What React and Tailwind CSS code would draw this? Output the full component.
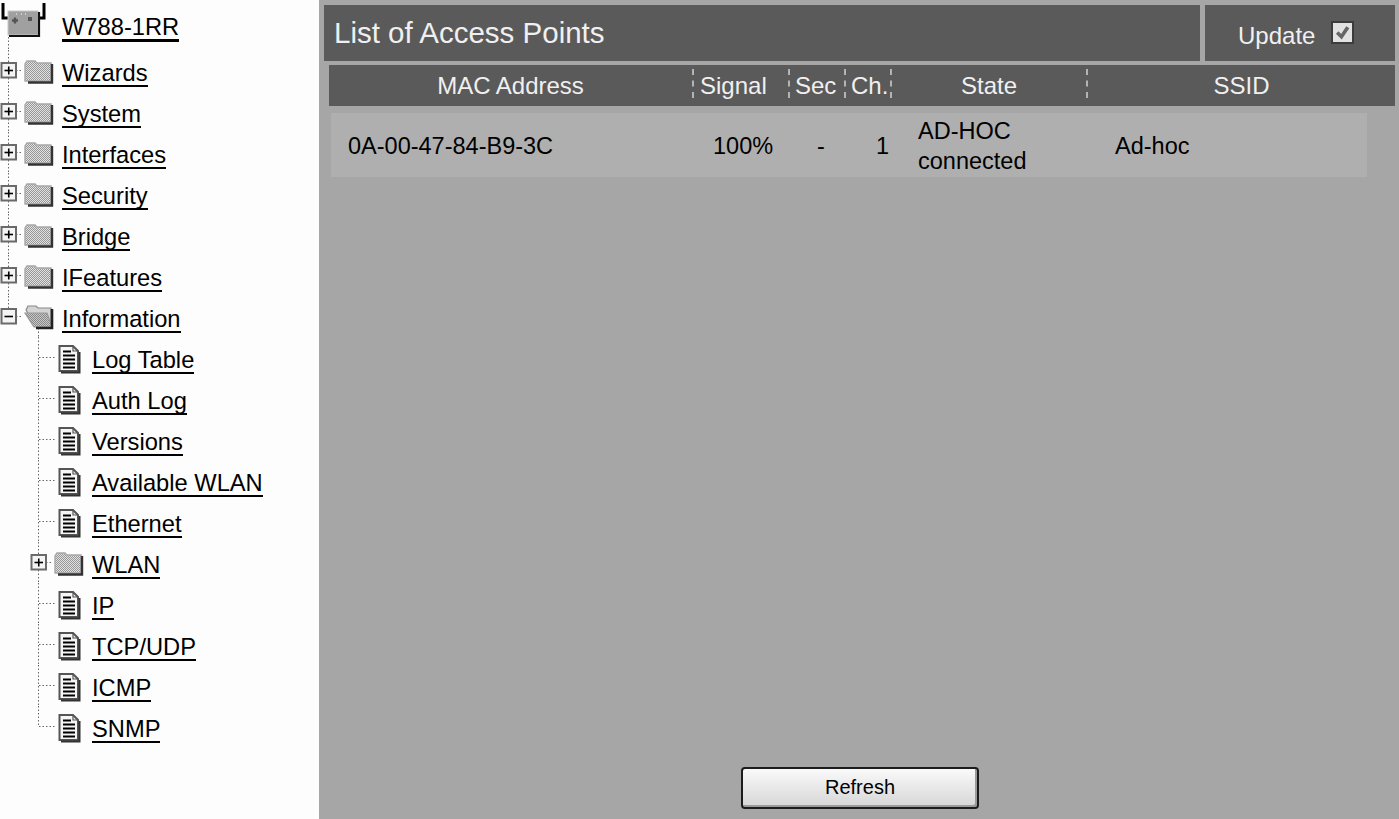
import React from 'react';

const treeItems = [
  { label: 'Wizards', kind: 'folder' },
  { label: 'System', kind: 'folder' },
  { label: 'Interfaces', kind: 'folder' },
  { label: 'Security', kind: 'folder' },
  { label: 'Bridge', kind: 'folder' },
  { label: 'IFeatures', kind: 'folder' },
  { label: 'Information', kind: 'open' },
  { label: 'Log Table', kind: 'doc' },
  { label: 'Auth Log', kind: 'doc' },
  { label: 'Versions', kind: 'doc' },
  { label: 'Available WLAN', kind: 'doc' },
  { label: 'Ethernet', kind: 'doc' },
  { label: 'WLAN', kind: 'subfolder' },
  { label: 'IP', kind: 'doc' },
  { label: 'TCP/UDP', kind: 'doc' },
  { label: 'ICMP', kind: 'doc' },
  { label: 'SNMP', kind: 'doc', last: true },
];

const DOTS = { stroke: '#666', strokeWidth: 1, strokeDasharray: '1.5 2' };

const ToggleBox = ({ x, open }) => (
  <g>
    <rect x={x + 0.5} y="13" width="14.5" height="14.5" fill="#f4f4f4" stroke="#6a6a6a" strokeWidth="2" />
    <path d={`M${x + 3.5} 20.5H${x + 12}`} stroke="#000" strokeWidth="1.6" />
    {!open && <path d={`M${x + 7.75} 16.5V24.5`} stroke="#000" strokeWidth="1.6" />}
  </g>
);

const ClosedFolder = ({ x }) => (
  <g transform={`translate(${x} 0)`}>
    <path d="M1 14 L3 11 H11 L13 13 H27 V31 H1 Z" fill="url(#dither)" stroke="#a8a8a8" strokeWidth="1.4" />
    <path d="M28 14 V32.5 H4" fill="none" stroke="#333" strokeWidth="2.4" />
  </g>
);

const OpenFolder = ({ x }) => (
  <g transform={`translate(${x} 0)`}>
    <path d="M2 14 L4 10 H12 L14 12 H27 V31 H12 Z" fill="#d4d4d4" stroke="#888" strokeWidth="1.2" />
    <path d="M1 17 H23 L28 31 H10 Z" fill="url(#ditherDark)" stroke="#999" strokeWidth="1.2" />
    <path d="M28 13 V32 H12" fill="none" stroke="#222" strokeWidth="2.6" />
  </g>
);

const DocIcon = ({ x }) => (
  <g transform={`translate(${x} 0)`}>
    <path d="M1.5 9 H15 L20 14 V34 H1.5 Z" fill="#f6f6f6" stroke="#555" strokeWidth="2" />
    <path d="M15 9 V14 H20" fill="none" stroke="#555" strokeWidth="1.2" />
    <path d="M5 14.5H13M5 18.5H17M5 22.5H17M5 26.5H17M5 30.5H17" stroke="#000" strokeWidth="2" />
    <path d="M21.5 15 V35.5 H3" fill="none" stroke="#333" strokeWidth="2" />
  </g>
);

// connector lines and icon for one tree row, 41px high
const TreeGutter = ({ kind, last }) => {
  if (kind === 'folder' || kind === 'open') {
    return (
      <svg width="62" height="41" className="shrink-0">
        <path d={kind === 'open' ? 'M8.5 0V14' : 'M8.5 0V41'} {...DOTS} />
        <path d="M16 20.5H23" {...DOTS} />
        <ToggleBox x={1} open={kind === 'open'} />
        {kind === 'open' && <path d="M38.5 32V41" {...DOTS} />}
        {kind === 'open' ? <OpenFolder x={24} /> : <ClosedFolder x={24} />}
      </svg>
    );
  }
  if (kind === 'subfolder') {
    return (
      <svg width="92" height="41" className="shrink-0">
        <path d="M38.5 0V13M38.5 28V41" {...DOTS} />
        <path d="M46 20.5H53" {...DOTS} />
        <ToggleBox x={31} />
        <ClosedFolder x={54} />
      </svg>
    );
  }
  return (
    <svg width="92" height="41" className="shrink-0">
      <path d={last ? 'M38.5 0V21' : 'M38.5 0V41'} {...DOTS} />
      <path d="M39 20.5H55" {...DOTS} />
      <DocIcon x={58} />
    </svg>
  );
};

const TreeRow = ({ item }) => (
  <div className="flex h-[41px] items-center">
    <TreeGutter kind={item.kind} last={item.last} />
    <a className="mt-[7px] border-b-2 border-black text-[23.7px] leading-[24px] whitespace-nowrap text-black">
      {item.label}
    </a>
  </div>
);

const DeviceIcon = () => (
  <svg width="62" height="50" className="shrink-0">
    <path d="M8.5 37V50" {...DOTS} />
    <path d="M3 3V18H9M44 3V18H38" fill="none" stroke="#000" strokeWidth="3" />
    <rect x="8" y="11" width="30" height="24" fill="#a0a0a0" stroke="#c8c8c8" strokeWidth="1" />
    <path d="M39 12V36H9" fill="none" stroke="#111" strokeWidth="2.2" />
    <path d="M12 20.5H18M15 17.5V23.5" stroke="#555" strokeWidth="2.4" />
    <rect x="28" y="17" width="4" height="4" fill="#555" />
    <path d="M16 14h1M21 14h1M25 14h1" stroke="#ddd" strokeWidth="1.5" />
  </svg>
);

const HeaderCell = ({ children, className }) => (
  <div className={`mt-[4px] h-[29px] border-l-2 border-dashed border-[#b4b4b4] leading-[34px] ${className}`}>
    {children}
  </div>
);

export default function App() {
  return (
    <div className="flex h-[819px] w-[1399px] overflow-hidden font-['Liberation_Sans',Arial,sans-serif]">
      <svg width="0" height="0" className="absolute">
        <defs>
          <pattern id="dither" width="2" height="2" patternUnits="userSpaceOnUse">
            <rect width="2" height="2" fill="#e2e2e2" />
            <rect width="1" height="1" fill="#969696" />
            <rect x="1" y="1" width="1" height="1" fill="#969696" />
          </pattern>
          <pattern id="ditherDark" width="2" height="2" patternUnits="userSpaceOnUse">
            <rect width="2" height="2" fill="#c8c8c8" />
            <rect width="1" height="1" fill="#888" />
            <rect x="1" y="1" width="1" height="1" fill="#888" />
          </pattern>
        </defs>
      </svg>

      <aside className="w-[319px] shrink-0 bg-[#fdfdfd]">
        <div className="flex h-[50px] items-start">
          <DeviceIcon />
          <a className="mt-[15px] border-b-[3px] border-black text-[23.7px] leading-[24px] text-black">W788-1RR</a>
        </div>
        {treeItems.map((item) => (
          <TreeRow key={item.label} item={item} />
        ))}
      </aside>

      <main className="flex min-w-0 flex-1 flex-col bg-[#a6a6a6] pt-[5px] pr-[4px] pl-[5px]">
        <div className="flex h-[56px] gap-[5px] text-[#f0f0f0]">
          <div className="flex flex-1 items-center bg-[#5a5a5a] pl-[10px] text-[29.5px]">List of Access Points</div>
          <div className="flex w-[190px] items-center bg-[#5a5a5a] pt-[5px] pl-[33px] text-[24px]">
            Update
            <span className="mb-[6px] ml-[16px] flex h-[23px] w-[23px] items-center justify-center border-2 border-[#3c3c3c] bg-[#e2e2e2]">
              <svg width="17" height="17" viewBox="0 0 16 16">
                <path d="M3 8L7 12L13 3" fill="none" stroke="#666" strokeWidth="3.4" />
              </svg>
            </span>
          </div>
        </div>

        <div className="mt-[4px] ml-[5px] grid h-[41px] grid-cols-[363px_96px_56px_46px_196px_1fr] bg-[#5a5a5a] text-[24px] text-[#f0f0f0]">
          <div className="pt-[4px] text-center leading-[34px]">MAC Address</div>
          <HeaderCell className="pl-[6px]">Signal</HeaderCell>
          <HeaderCell className="pl-[5px]">Sec</HeaderCell>
          <HeaderCell className="pl-[5px]">Ch.</HeaderCell>
          <HeaderCell className="text-center">State</HeaderCell>
          <HeaderCell className="text-center">SSID</HeaderCell>
        </div>

        <div className="mt-[7px] ml-[7px] grid h-[64px] w-[1036px] grid-cols-[361px_96px_56px_46px_196px_1fr] items-center bg-[#afafaf] pt-[3px] text-[23.5px] text-black">
          <div className="pl-[17px]">0A-00-47-84-B9-3C</div>
          <div className="pl-[21px]">100%</div>
          <div className="pl-[29px]">-</div>
          <div className="pl-[32px]">1</div>
          <div className="mb-[2px] pl-[28px] leading-[30px]">
            AD-HOC
            <br />
            connected
          </div>
          <div className="pl-[29px]">Ad-hoc</div>
        </div>

        <div className="mt-auto mb-[10px] flex justify-center pl-[1px]">
          <button className="h-[42px] w-[238px] rounded-[4px] border-2 border-[#1c1c1c] bg-gradient-to-b from-[#fafafa] to-[#d6d6d6] pb-[3px] text-[20px] text-black shadow-[inset_-2px_-2px_0_#9a9a9a]">
            Refresh
          </button>
        </div>
      </main>
    </div>
  );
}
